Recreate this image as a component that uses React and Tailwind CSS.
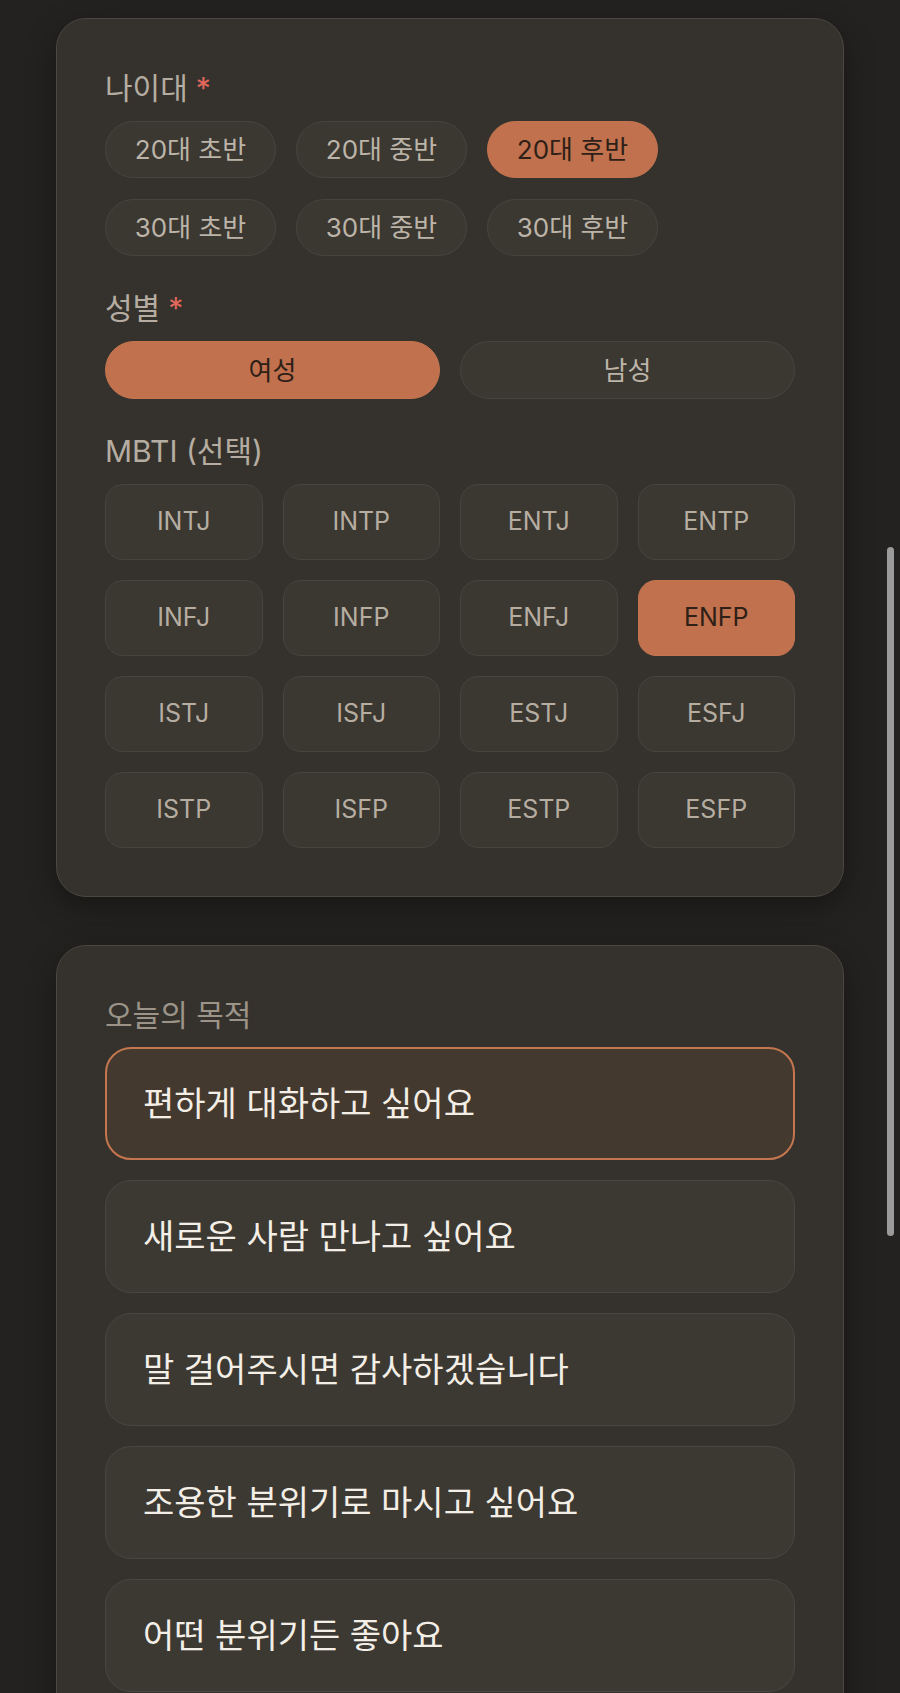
import React, { useState } from "react";

const AGES = ["20대 초반", "20대 중반", "20대 후반", "30대 초반", "30대 중반", "30대 후반"];
const MBTI = [
  "INTJ", "INTP", "ENTJ", "ENTP",
  "INFJ", "INFP", "ENFJ", "ENFP",
  "ISTJ", "ISFJ", "ESTJ", "ESFJ",
  "ISTP", "ISFP", "ESTP", "ESFP",
];
const PURPOSES = [
  "편하게 대화하고 싶어요",
  "새로운 사람 만나고 싶어요",
  "말 걸어주시면 감사하겠습니다",
  "조용한 분위기로 마시고 싶어요",
  "어떤 분위기든 좋아요",
];

const Label = ({ children, required }) => (
  <div className="mb-3 text-[30px] leading-[42px] text-[#b5ada1]">
    {children}
    {required && <span className="ml-2 text-[#e4675c]">*</span>}
  </div>
);

const App = () => {
  const [age, setAge] = useState("20대 후반");
  const [gender, setGender] = useState("여성");
  const [mbti, setMbti] = useState("ENFP");
  const [purpose, setPurpose] = useState(PURPOSES[0]);

  return (
    <div className="min-h-screen bg-[#242220] px-14 pt-[18px] pb-12 font-['Inter','Noto_Sans_CJK_KR',sans-serif]">
      {/* Profile card */}
      <section className="rounded-[30px] border border-[#4a4740] bg-[#35322d] p-12 shadow-[0_10px_30px_rgba(0,0,0,0.35)]">
        <div>
          <Label required>나이대</Label>
          <div className="grid grid-cols-[repeat(3,171px)] gap-x-5 gap-y-[21px]">
            {AGES.map((a) => (
              <button
                key={a}
                onClick={() => setAge(a)}
                className={`h-[57px] rounded-full border text-[26px] ${
                  age === a
                    ? "border-[#c4754f] bg-[#c1714e] text-[#2e1f17]"
                    : "border-[#48443d] bg-[#3b3731] text-[#bcb4a8]"
                }`}
              >
                {a}
              </button>
            ))}
          </div>
        </div>

        <div className="mt-[31px]">
          <Label required>성별</Label>
          <div className="grid grid-cols-2 gap-5">
            {["여성", "남성"].map((g) => (
              <button
                key={g}
                onClick={() => setGender(g)}
                className={`h-[58px] rounded-full border text-[26px] ${
                  gender === g
                    ? "border-[#c4754f] bg-[#c1714e] text-[#2e1f17]"
                    : "border-[#48443d] bg-[#3b3731] text-[#bcb4a8]"
                }`}
              >
                {g}
              </button>
            ))}
          </div>
        </div>

        <div className="mt-[31px]">
          <Label>MBTI (선택)</Label>
          <div className="grid grid-cols-4 gap-5">
            {MBTI.map((m) => (
              <button
                key={m}
                onClick={() => setMbti(m)}
                className={`h-[76px] rounded-[18px] border text-[25px] ${
                  mbti === m
                    ? "border-[#c4754f] bg-[#c1714e] text-[#2e1f17]"
                    : "border-[#48443d] bg-[#3b3731] text-[#b6ada1]"
                }`}
              >
                {m}
              </button>
            ))}
          </div>
        </div>
      </section>

      {/* Purpose card */}
      <section className="mt-12 rounded-[30px] border border-[#4a4740] bg-[#35322d] p-12 shadow-[0_10px_30px_rgba(0,0,0,0.35)]">
        <div className="mb-[11px] text-[30px] leading-[42px] text-[#9c9488]">오늘의 목적</div>
        <div className="flex flex-col gap-5">
          {PURPOSES.map((p) => (
            <button
              key={p}
              onClick={() => setPurpose(p)}
              className={`flex h-[113px] items-center rounded-[26px] text-left text-[34px] text-[#f3eee6] ${
                purpose === p
                  ? "border-2 border-[#c4764f] bg-[#44392f] pl-9"
                  : "border border-[#4a453e] bg-[#3c3832] pl-[37px]"
              }`}
            >
              {p}
            </button>
          ))}
        </div>
      </section>

      {/* overlay scroll indicator */}
      <div className="fixed right-[6px] top-[547px] h-[689px] w-[7px] rounded-full bg-[#9b9b9b]" />
    </div>
  );
};

export default App;
